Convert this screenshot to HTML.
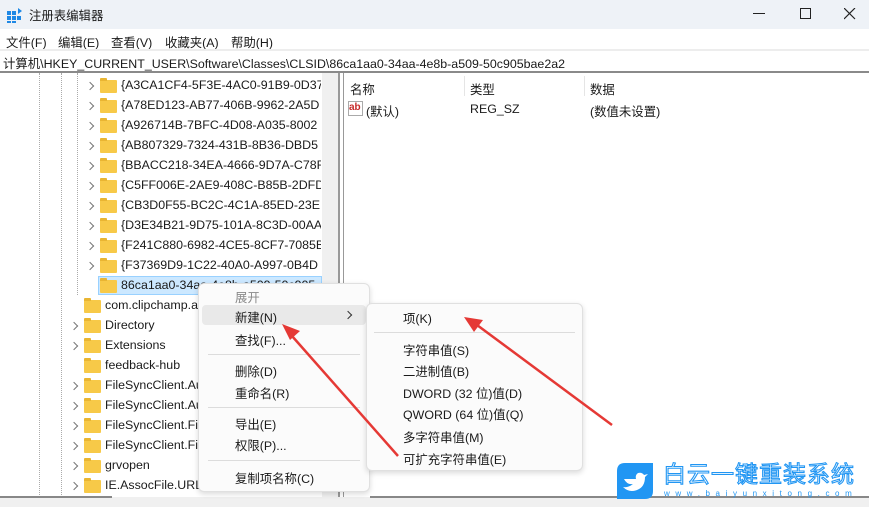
<!DOCTYPE html>
<html><head><meta charset="utf-8"><style>
*{margin:0;padding:0;box-sizing:border-box}
body{width:869px;height:507px;overflow:hidden;background:#fff;font-family:"Liberation Sans","Noto Sans CJK SC",sans-serif;font-size:12.4px;color:#1a1a1a;position:relative}
.a{position:absolute;white-space:nowrap}
.fold{position:absolute;width:17px;height:13px;background:#f7c948;border-radius:1px}
.fold:before{content:"";position:absolute;left:0;top:-2px;width:7px;height:3px;background:#e9b532;border-radius:1px 1px 0 0}
.chev{position:absolute;width:6px;height:6px;border-right:1px solid #777;border-top:1px solid #777;transform:rotate(45deg)}
.mi{position:absolute;font-size:12.4px}
.sep{position:absolute;height:1px;background:#dcdcdc}
</style></head><body>
<div class="a" style="left:0;top:0;width:869px;height:29px;background:#eef2f7"></div>
<svg class="a" style="left:7px;top:7px" width="16" height="16"><rect x="0" y="4" width="4" height="4" fill="#1e88e5"/><rect x="5" y="4" width="4" height="4" fill="#1e88e5"/><rect x="0" y="9" width="4" height="4" fill="#1e88e5"/><rect x="5" y="9" width="4" height="4" fill="#1e88e5"/><rect x="10" y="9" width="4" height="4" fill="#1e88e5"/><rect x="0" y="14" width="4" height="2" fill="#1e88e5"/><rect x="5" y="14" width="4" height="2" fill="#1e88e5"/><path d="M11 1l4 3-4 3z" fill="#1e88e5"/></svg>
<div class="a" style="left:29px;top:6px">注册表编辑器</div>
<div class="a" style="left:753px;top:13px;width:12px;height:1px;background:#222"></div>
<div class="a" style="left:800px;top:8px;width:11px;height:11px;border:1px solid #222"></div>
<svg class="a" style="left:844px;top:8px" width="12" height="12"><path d="M0 0L11 11M11 0L0 11" stroke="#222" stroke-width="1.2"/></svg>
<div class="a" style="left:6px;top:33px">文件(F)</div>
<div class="a" style="left:58px;top:33px">编辑(E)</div>
<div class="a" style="left:111px;top:33px">查看(V)</div>
<div class="a" style="left:165px;top:33px">收藏夹(A)</div>
<div class="a" style="left:231px;top:33px">帮助(H)</div>
<div class="a" style="left:0;top:49px;width:869px;height:2px;background:#ededed"></div>
<div class="a" style="left:3px;top:54px;font-size:12.4px">计算机\HKEY_CURRENT_USER\Software\Classes\CLSID\86ca1aa0-34aa-4e8b-a509-50c905bae2a2</div>
<div class="a" style="left:0;top:71px;width:869px;height:2px;background:#8a8a8a"></div>
<div class="a" style="left:322px;top:73px;width:18px;height:424px;background:#f0f0f0"></div>
<div class="a" style="left:338px;top:73px;width:2px;height:434px;background:#999"></div>
<div class="a" style="left:343px;top:73px;width:1px;height:434px;background:#999"></div>
<div class="a" style="left:39px;top:73px;height:424px;border-left:1px dotted #aaa"></div>
<div class="a" style="left:61px;top:73px;height:424px;border-left:1px dotted #aaa"></div>
<div class="a" style="left:77px;top:73px;height:222px;border-left:1px dotted #aaa"></div>
<div id="tree"></div>
<div class="a" style="left:350px;top:80px">名称</div>
<div class="a" style="left:470px;top:80px">类型</div>
<div class="a" style="left:590px;top:80px">数据</div>
<div class="a" style="left:464px;top:76px;width:1px;height:20px;background:#e5e5e5"></div>
<div class="a" style="left:584px;top:76px;width:1px;height:20px;background:#e5e5e5"></div>
<div class="a" style="left:348px;top:101px;width:15px;height:15px;border:1px solid #aaa;background:#fff;color:#c62828;font-size:10px;font-weight:bold;line-height:12px">ab</div>
<div class="a" style="left:366px;top:102px">(默认)</div>
<div class="a" style="left:470px;top:102px">REG_SZ</div>
<div class="a" style="left:590px;top:102px">(数值未设置)</div>
<div class="a" style="left:0;top:497px;width:869px;height:10px;background:#f0f0f0"></div>
<div class="a" style="left:0;top:496px;width:112px;height:2px;background:#888"></div>
<div class="a" style="left:370px;top:496px;width:499px;height:2px;background:#888"></div>
<div class="a" style="left:198px;top:283px;width:172px;height:209px;background:#fbfbfb;border:1px solid #e0e0e0;border-radius:6px;box-shadow:0 2px 6px rgba(0,0,0,.15)"></div>
<div class="a" style="left:202px;top:305px;width:164px;height:20px;background:#e9e9e9;border-radius:4px"></div>
<div class="mi" style="left:235px;top:288px;color:#8a8a8a">展开</div>
<div class="mi" style="left:235px;top:308px">新建(N)</div>
<div class="chev" style="left:345px;top:312px;border-color:#333"></div>
<div class="mi" style="left:235px;top:331px">查找(F)...</div>
<div class="sep" style="left:208px;top:354px;width:152px"></div>
<div class="mi" style="left:235px;top:362px">删除(D)</div>
<div class="mi" style="left:235px;top:384px">重命名(R)</div>
<div class="sep" style="left:208px;top:407px;width:152px"></div>
<div class="mi" style="left:235px;top:415px">导出(E)</div>
<div class="mi" style="left:235px;top:436px">权限(P)...</div>
<div class="sep" style="left:208px;top:460px;width:152px"></div>
<div class="mi" style="left:235px;top:469px">复制项名称(C)</div>
<div class="a" style="left:366px;top:303px;width:217px;height:168px;background:#fbfbfb;border:1px solid #e0e0e0;border-radius:6px;box-shadow:0 2px 6px rgba(0,0,0,.15)"></div>
<div class="mi" style="left:403px;top:309px">项(K)</div>
<div class="sep" style="left:374px;top:332px;width:201px"></div>
<div class="mi" style="left:403px;top:341px">字符串值(S)</div>
<div class="mi" style="left:403px;top:362px">二进制值(B)</div>
<div class="mi" style="left:403px;top:384px">DWORD (32 位)值(D)</div>
<div class="mi" style="left:403px;top:405px">QWORD (64 位)值(Q)</div>
<div class="mi" style="left:403px;top:428px">多字符串值(M)</div>
<div class="mi" style="left:403px;top:450px">可扩充字符串值(E)</div>
<svg class="a" style="left:0;top:0" width="869" height="507">
<line x1="398" y1="456" x2="292" y2="336" stroke="#e53935" stroke-width="2.5"/>
<path d="M282 324 L300 331 L290 340 Z" fill="#e53935"/>
<line x1="612" y1="425" x2="477" y2="325" stroke="#e53935" stroke-width="2.5"/>
<path d="M464 317 L483 320 L474 332 Z" fill="#e53935"/>
</svg>
<svg class="a" style="left:617px;top:463px" width="36" height="36"><path d="M8 0H36V28Q36 36 28 36H0V8Q0 0 8 0Z" fill="#2196f3"/><path d="M7 16Q10 22 16 21Q11 25 6 24Q12 30 20 27Q28 24 28 14L31 11L27 12Q25 9 21 10Q18 12 19 16Q13 16 7 16Z" fill="#fff"/></svg>
<div class="a" style="left:663px;top:461px;font-size:23px;line-height:26px;color:#fff;-webkit-text-stroke:1.1px #2196f3;letter-spacing:1px">白云一键重装系统</div>
<div class="a" style="left:664px;top:489px;font-size:8px;line-height:9px;color:#2196f3;letter-spacing:5.6px">www.baiyunxitong.com</div>
<script>
var rows=["{A3CA1CF4-5F3E-4AC0-91B9-0D37","{A78ED123-AB77-406B-9962-2A5D","{A926714B-7BFC-4D08-A035-8002","{AB807329-7324-431B-8B36-DBD5","{BBACC218-34EA-4666-9D7A-C78F","{C5FF006E-2AE9-408C-B85B-2DFDI","{CB3D0F55-BC2C-4C1A-85ED-23ED","{D3E34B21-9D75-101A-8C3D-00AA","{F241C880-6982-4CE5-8CF7-7085B","{F37369D9-1C22-40A0-A997-0B4D"];
var h="";
rows.forEach(function(t,i){var y=76+i*20;h+='<div class="chev" style="left:87px;top:'+(y+7)+'px"></div><div class="fold" style="left:100px;top:'+(y+4)+'px"></div><div class="a" style="left:121px;top:'+(y+2)+'px;width:200px;overflow:hidden">'+t+'</div>';});
h+='<div class="a" style="left:98px;top:276px;width:224px;height:19px;background:#cce8ff;border:1px solid #99d1ff"></div><div class="fold" style="left:100px;top:280px"></div><div class="a" style="left:121px;top:278px">86ca1aa0-34aa-4e8b-a509-50c905</div>';
var r2=[["com.clipchamp.a",0],["Directory",1],["Extensions",1],["feedback-hub",0],["FileSyncClient.Au",1],["FileSyncClient.Au",1],["FileSyncClient.Fil",1],["FileSyncClient.Fil",1],["grvopen",1],["IE.AssocFile.URL",1]];
r2.forEach(function(r,i){var y=296+i*20;if(r[1])h+='<div class="chev" style="left:71px;top:'+(y+7)+'px"></div>';h+='<div class="fold" style="left:84px;top:'+(y+4)+'px"></div><div class="a" style="left:105px;top:'+(y+2)+'px">'+r[0]+'</div>';});
document.getElementById("tree").innerHTML=h;
</script>
</body></html>
